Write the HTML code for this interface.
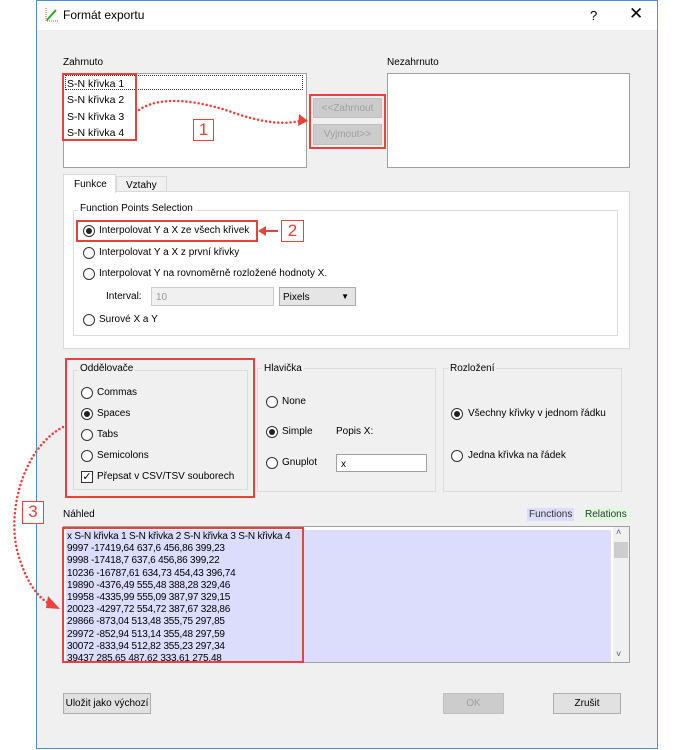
<!DOCTYPE html>
<html><head><meta charset="utf-8">
<style>
*{box-sizing:border-box;margin:0;padding:0}
body{width:693px;height:750px;background:#fff;position:relative;overflow:hidden;font-family:"Liberation Sans",sans-serif;font-size:10px;color:#000}
.a{position:absolute;white-space:nowrap}
.win{left:36px;top:0;width:622px;height:749px;border:1px solid #4a90d9;background:#f0f0f0}
.tb{left:37px;top:1px;width:620px;height:29px;background:#fff}
.box{background:#fff;border:1px solid #a0a0a0}
.grp{border:1px solid #dcdcdc}
.lbl{background:#f0f0f0;padding:0 2px}
.rad{width:12px;height:12px;border:1px solid #333;border-radius:50%;background:#fff}
.rad.on::after{content:"";position:absolute;left:2px;top:2px;width:6px;height:6px;border-radius:50%;background:#222}
.btn{background:#e1e1e1;border:1px solid #adadad;text-align:center;line-height:19px}
.dis{color:#a0a0a0;background:#ccc;border-color:#bfbfbf}
.red{border:2px solid #e8413e}
.num{border:1px solid #e8413e;color:#e8413e;font-size:17px;text-align:center;line-height:20px;background:#fff}
</style></head><body>
<div class="a win"></div>
<div class="a tb"></div>
<svg class="a" style="left:44px;top:7px" width="16" height="16"><path d="M2 1V14H15" stroke="#e8413e" stroke-width="1" fill="none" stroke-dasharray="1 1"/><path d="M3 13L12 3" stroke="#2a2" stroke-width="2"/></svg>
<div class="a" style="left:63px;top:8px;font-size:12px">Formát exportu</div>
<div class="a" style="left:590px;top:8px;font-size:13px">?</div>
<div class="a" style="left:629px;top:4px;font-size:17px;font-weight:300">✕</div>

<div class="a" style="left:63px;top:57px">Zahrnuto</div>
<div class="a box" style="left:63px;top:73px;width:244px;height:95px"></div>
<div class="a" style="left:65px;top:75px;width:238px;height:15px;border:1px dotted #333"></div>
<div class="a" style="left:67px;top:76px;line-height:16.3px;font-size:10.5px">S-N křivka 1<br>S-N křivka 2<br>S-N křivka 3<br>S-N křivka 4</div>
<div class="a red" style="left:62px;top:73px;width:75px;height:68px"></div>
<div class="a btn dis" style="left:313px;top:98px;width:69px;height:20px">&lt;&lt;Zahrnout</div>
<div class="a btn dis" style="left:313px;top:124px;width:69px;height:21px">Vyjmout&gt;&gt;</div>
<div class="a red" style="left:309px;top:94px;width:77px;height:55px"></div>
<div class="a" style="left:387px;top:57px">Nezahrnuto</div>
<div class="a box" style="left:387px;top:73px;width:243px;height:95px"></div>

<div class="a" style="left:116px;top:176px;width:51px;height:16px;border:1px solid #d9d9d9;border-bottom:none;background:#f0f0f0;padding:3px 0 0 9px">Vztahy</div>
<div class="a" style="left:63px;top:191px;width:567px;height:158px;background:#fff;border:1px solid #d9d9d9"></div>
<div class="a" style="left:63px;top:174px;width:53px;height:19px;border:1px solid #d9d9d9;border-bottom:none;background:#fff;padding:4px 0 0 10px">Funkce</div>
<div class="a grp" style="left:73px;top:210px;width:545px;height:126px"></div>
<div class="a" style="left:78px;top:203px;background:#fff;padding:0 2px">Function Points Selection</div>
<div class="a rad on" style="left:83px;top:225px"></div><div class="a" style="left:99px;top:225px">Interpolovat Y a X ze všech křivek</div>
<div class="a rad" style="left:83px;top:247px"></div><div class="a" style="left:99px;top:247px">Interpolovat Y a X z první křivky</div>
<div class="a rad" style="left:83px;top:268px"></div><div class="a" style="left:99px;top:268px">Interpolovat Y na rovnoměrně rozložené hodnoty X.</div>
<div class="a" style="left:106px;top:291px">Interval:</div>
<div class="a" style="left:151px;top:287px;width:123px;height:19px;background:#f0f0f0;border:1px solid #ccc;color:#999;padding:4px 0 0 4px">10</div>
<div class="a" style="left:279px;top:287px;width:77px;height:19px;background:#e5e5e5;border:1px solid #adadad;padding:4px 0 0 3px">Pixels<span style="position:absolute;right:6px;top:4px;font-size:8px">▼</span></div>
<div class="a rad" style="left:83px;top:314px"></div><div class="a" style="left:99px;top:314px">Surové X a Y</div>
<div class="a red" style="left:76px;top:220px;width:182px;height:22px"></div>

<div class="a grp" style="left:73px;top:370px;width:175px;height:120px"></div>
<div class="a lbl" style="left:78px;top:363px">Oddělovače</div>
<div class="a rad" style="left:81px;top:387px"></div><div class="a" style="left:97px;top:387px">Commas</div>
<div class="a rad on" style="left:81px;top:408px"></div><div class="a" style="left:97px;top:408px">Spaces</div>
<div class="a rad" style="left:81px;top:429px"></div><div class="a" style="left:97px;top:429px">Tabs</div>
<div class="a rad" style="left:81px;top:450px"></div><div class="a" style="left:97px;top:450px">Semicolons</div>
<div class="a" style="left:81px;top:471px;width:12px;height:12px;border:1px solid #333;background:#fff;font-size:11px;line-height:10px;text-align:center">✓</div><div class="a" style="left:97px;top:471px">Přepsat v CSV/TSV souborech</div>
<div class="a red" style="left:65px;top:358px;width:190px;height:140px"></div>

<div class="a grp" style="left:257px;top:368px;width:179px;height:124px"></div>
<div class="a lbl" style="left:262px;top:363px">Hlavička</div>
<div class="a rad" style="left:266px;top:396px"></div><div class="a" style="left:282px;top:396px">None</div>
<div class="a rad on" style="left:266px;top:426px"></div><div class="a" style="left:282px;top:426px">Simple</div>
<div class="a" style="left:336px;top:426px">Popis X:</div>
<div class="a rad" style="left:266px;top:457px"></div><div class="a" style="left:282px;top:457px">Gnuplot</div>
<div class="a box" style="left:336px;top:454px;width:91px;height:18px;padding:4px 0 0 4px">x</div>
<div class="a grp" style="left:443px;top:368px;width:179px;height:124px"></div>
<div class="a lbl" style="left:448px;top:363px">Rozložení</div>
<div class="a rad on" style="left:451px;top:408px"></div><div class="a" style="left:468px;top:408px">Všechny křivky v jednom řádku</div>
<div class="a rad" style="left:451px;top:450px"></div><div class="a" style="left:468px;top:450px">Jedna křivka na řádek</div>

<div class="a" style="left:63px;top:509px">Náhled</div>
<div class="a" style="left:527px;top:508px;background:#dcdcfc;padding:1px 2px;color:#333">Functions</div>
<div class="a" style="left:583px;top:508px;background:#dcfcdc;padding:1px 2px;color:#333">Relations</div>
<div class="a box" style="left:63px;top:526px;width:567px;height:137px"></div>
<div class="a" style="left:66px;top:530px;width:545px;height:132px;background:#dcdcfc"></div>
<div class="a" style="left:613px;top:527px;width:16px;height:135px;background:#f0f0f0"></div>
<div class="a" style="left:614px;top:542px;width:14px;height:16px;background:#cdcdcd"></div>
<div class="a" style="left:616px;top:527px;font-size:9px;color:#555">˄</div>
<div class="a" style="left:616px;top:649px;font-size:9px;color:#555">˅</div>
<div class="a" style="left:67px;top:531px;line-height:12.2px;font-size:10px;letter-spacing:-0.2px">x S-N křivka 1 S-N křivka 2 S-N křivka 3 S-N křivka 4<br>9997 -17419,64 637,6 456,86 399,23<br>9998 -17418,7 637,6 456,86 399,22<br>10236 -16787,61 634,73 454,43 396,74<br>19890 -4376,49 555,48 388,28 329,46<br>19958 -4335,99 555,09 387,97 329,15<br>20023 -4297,72 554,72 387,67 328,86<br>29866 -873,04 513,48 355,75 297,85<br>29972 -852,94 513,14 355,48 297,59<br>30072 -833,94 512,82 355,23 297,34<br>39437 285,65 487,62 333,61 275,48</div>
<div class="a red" style="left:62px;top:527px;width:242px;height:136px"></div>

<div class="a btn" style="left:63px;top:693px;width:88px;height:21px">Uložit jako výchozí</div>
<div class="a btn dis" style="left:443px;top:693px;width:61px;height:21px">OK</div>
<div class="a btn" style="left:553px;top:693px;width:68px;height:21px">Zrušit</div>

<div class="a num" style="left:193px;top:119px;width:21px;height:22px">1</div>
<div class="a num" style="left:281px;top:220px;width:23px;height:22px">2</div>
<div class="a num" style="left:22px;top:501px;width:22px;height:23px">3</div>
<svg class="a" style="left:0;top:0" width="693" height="750">
<g fill="none" stroke="#e8413e" stroke-width="2.5" stroke-dasharray="0.1 4" stroke-linecap="round">
<path d="M139 110 C160 95,200 100,240 115 C270 124,285 124,300 121"/>
<path d="M63 427 C20 450,5 520,20 560 C28 585,40 600,52 605"/>
</g>
<path d="M299 114L308 121L298 126Z" fill="#e8413e"/>
<path d="M48 596L60 609L46 608Z" fill="#e8413e"/>
<path d="M278 231H264" stroke="#e8413e" stroke-width="2"/>
<path d="M258 231L266 226V236Z" fill="#e8413e"/>
</svg>
</body></html>
